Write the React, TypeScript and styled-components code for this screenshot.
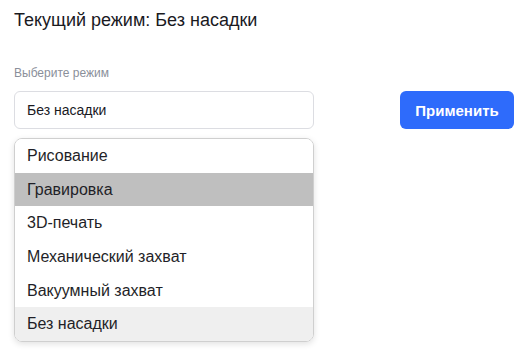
import { createGlobalStyle } from 'styled-components';
import styled from 'styled-components';

const GlobalStyle = createGlobalStyle`
  body {
    margin: 0;
    background: #ffffff;
    font-family: 'Liberation Sans', Arial, sans-serif;
    color: #1f1f24;
  }
`;

const Page = styled.div`
  display: flex;
  flex-direction: column;
  padding: 10px 14px;
  width: 500px;
`;

const Title = styled.h2`
  margin: 0;
  font-size: 18px;
  font-weight: 400;
  line-height: 21px;
  color: #1a1a1f;
`;

const Label = styled.label`
  margin-top: 35px;
  font-size: 12px;
  line-height: 14px;
  color: #8a8f9a;
`;

const Row = styled.div`
  display: flex;
  justify-content: space-between;
  align-items: center;
  margin-top: 11px;
`;

const SelectBox = styled.div`
  box-sizing: border-box;
  width: 300px;
  height: 38px;
  display: flex;
  align-items: center;
  padding: 0 12px;
  border: 1px solid #dcdde2;
  border-radius: 6px;
  font-size: 14px;
  color: #1a1a1f;
`;

const ApplyButton = styled.button`
  width: 114px;
  height: 38px;
  border: none;
  border-radius: 6px;
  background: #2e6bfb;
  color: #ffffff;
  font-family: 'Liberation Sans', Arial, sans-serif;
  font-size: 15px;
  font-weight: 700;
  cursor: pointer;
`;

const Menu = styled.ul`
  box-sizing: border-box;
  list-style: none;
  margin: 9px 0 0;
  padding: 0;
  width: 300px;
  border: 1px solid #cfcfcf;
  border-radius: 8px;
  overflow: hidden;
  box-shadow: 0 2px 6px rgba(0, 0, 0, 0.12);
`;

const Item = styled.li<{ $tone?: 'hover' | 'selected' }>`
  height: 33.7px;
  display: flex;
  align-items: center;
  padding: 0 12px;
  font-size: 16px;
  color: #1f1f28;
  background: ${(p) =>
    p.$tone === 'hover' ? '#bfbfbf' : p.$tone === 'selected' ? '#efefef' : '#ffffff'};
`;

const modes = ['Рисование', 'Гравировка', '3D-печать', 'Механический захват', 'Вакуумный захват', 'Без насадки'];

const App = () => {
  const current = 'Без насадки';
  const hovered = 'Гравировка';
  return (
    <>
      <GlobalStyle />
      <Page>
        <Title>Текущий режим: {current}</Title>
        <Label>Выберите режим</Label>
        <Row>
          <SelectBox>{current}</SelectBox>
          <ApplyButton>Применить</ApplyButton>
        </Row>
        <Menu>
          {modes.map((m) => (
            <Item key={m} $tone={m === hovered ? 'hover' : m === current ? 'selected' : undefined}>
              {m}
            </Item>
          ))}
        </Menu>
      </Page>
    </>
  );
};

export default App;
